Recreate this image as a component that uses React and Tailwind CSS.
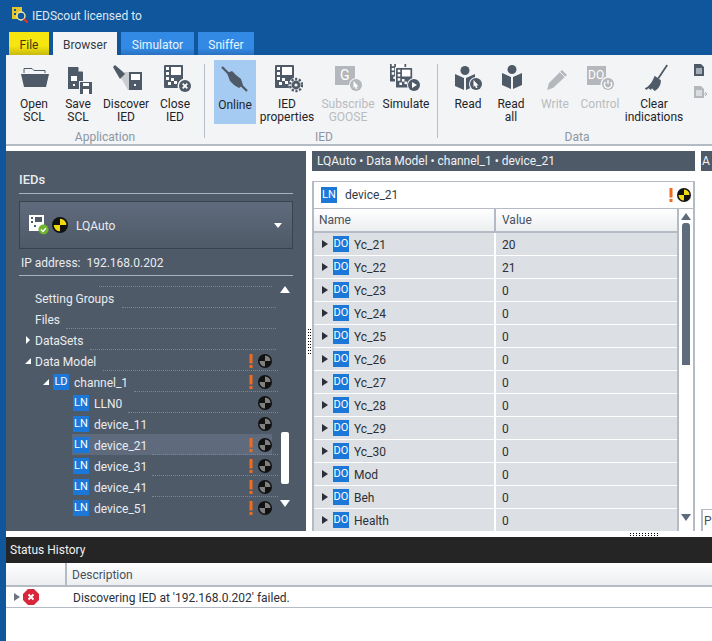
import React from "react";

const dark = "#4f5a68";
const grey = "#b4b8bd";

// the small device with screen and checker squares, used in several ribbon icons
const Device = ({ x = 3, y = 1, scale = 1, color = dark }) => (
  <g transform={`translate(${x} ${y}) scale(${scale})`}>
    <rect width="19" height="23" rx="1" fill={color} />
    <rect x="2" y="2" width="3" height="3" fill="#fff" />
    <rect x="2" y="7" width="3" height="3" fill="#fff" />
    <rect x="7" y="2" width="10" height="8" fill="#fff" />
    <rect x="2" y="12" width="3" height="3" fill="#fff" />
    <rect x="7" y="13" width="3" height="3" fill="#fff" />
    <rect x="10" y="16" width="3" height="3" fill="#fff" />
    <rect x="4" y="17" width="3" height="3" fill="#fff" />
  </g>
);

const Gear = ({ cx, cy }) => (
  <g>
    <circle cx={cx} cy={cy} r="7.5" fill="#f3f4f6" />
    <circle cx={cx} cy={cy} r="6" fill="none" stroke={dark} strokeWidth="2.4" strokeDasharray="2.2 1.6" />
    <circle cx={cx} cy={cy} r="4.4" fill={dark} />
    <circle cx={cx} cy={cy} r="1.6" fill="#f3f4f6" />
  </g>
);

const Cursor = ({ cx, cy, color = dark }) => (
  <g>
    <circle cx={cx} cy={cy} r="7" fill="#f3f4f6" />
    <circle cx={cx} cy={cy} r="6" fill={color} />
    <path d={`M${cx - 2.5} ${cy - 4} l5 5.5 h-2 l1 2.5 h-1.6 l-1 -2.5 l-1.4 1.4 z`} fill="#fff" />
  </g>
);

const Book = ({ x, y }) => (
  <g transform={`translate(${x} ${y})`} fill={dark}>
    <circle cx="10" cy="4.5" r="4.5" />
    <path d="M0 8 L9 12 V24 L0 20 Z" />
    <path d="M20 8 L11 12 V24 L20 20 Z" />
  </g>
);

const Icon = ({ children }) => (
  <svg viewBox="0 0 32 32" className="w-8 h-8">
    {children}
  </svg>
);

const icons = {
  open: (
    <Icon>
      <path d="M6 9 V4.5 h8 l2 2 h11 V9" fill="none" stroke={dark} strokeWidth="1" />
      <path d="M3 10 H31 L28 23 H6 Z" fill={dark} />
    </Icon>
  ),
  save: (
    <Icon>
      <path d="M6 3 H16 L21 8 V25 H6 Z" fill={dark} />
      <path d="M16.5 3 L21 7.5 H16.5 Z" fill="#f3f4f6" />
      <rect x="9" y="12" width="6" height="5" fill="#fff" />
      <rect x="11" y="20" width="2" height="2" fill="#fff" />
      <rect x="17" y="17" width="14" height="14" fill="#f3f4f6" />
      <path d="M18 18 H30 V30 H18 Z" fill={dark} />
      <rect x="21" y="19" width="6" height="3" fill="#fff" />
      <rect x="21" y="25" width="6" height="5" fill="#fff" />
    </Icon>
  ),
  discover: (
    <Icon>
      <path d="M14 8 L20 8 V26 H18 L11 14 Z" fill="#c9cdd2" />
      <rect x="19" y="8" width="13" height="18" fill={dark} />
      <rect x="21" y="10" width="9" height="6" fill="#fff" />
      <rect x="24" y="20" width="2" height="2" fill="#fff" />
      <path d="M3 3 L5 1 L12 7 L15 10 L10 15 L7 10 Z" fill={dark} />
    </Icon>
  ),
  close: (
    <Icon>
      <Device x={5} y={1} />
      <circle cx="26" cy="22" r="7.5" fill="#f3f4f6" />
      <circle cx="26" cy="22" r="6" fill={dark} />
      <path d="M23.7 19.7 L28.3 24.3 M28.3 19.7 L23.7 24.3" stroke="#fff" strokeWidth="1.8" />
    </Icon>
  ),
  online: (
    <Icon>
      <path d="M3 3 L10 10 M21 20 L28 27" stroke={dark} strokeWidth="2.4" />
      <path d="M8 9 L13 7 L17 11 L22 15 L24 21 L20 24 L15 21 L11 17 Z" fill={dark} />
    </Icon>
  ),
  props: (
    <Icon>
      <Device x={4} y={1} />
      <Gear cx={25} cy={21} />
    </Icon>
  ),
  subscribe: (
    <Icon>
      <rect x="3" y="2" width="20" height="19" fill={grey} />
      <text x="8" y="16" fontSize="14" fontFamily="Roboto" fill="#fff">G</text>
      <Cursor cx={24} cy={21} color={grey} />
    </Icon>
  ),
  simulate: (
    <Icon>
      <Device x={0} y={-2} scale={0.85} />
      <rect x="5" y="3" width="19" height="22" fill="#f3f4f6" />
      <Device x={6} y={4} scale={0.85} />
      <circle cx="24" cy="21" r="7" fill="#f3f4f6" />
      <circle cx="24" cy="21" r="6" fill={dark} />
      <path d="M22 18 L27 21 L22 24 Z" fill="#fff" />
    </Icon>
  ),
  read: (
    <Icon>
      <Book x={3} y={2} />
      <Cursor cx={24} cy={20} />
    </Icon>
  ),
  readAll: (
    <Icon>
      <Book x={7} y={1} />
    </Icon>
  ),
  write: (
    <Icon>
      <path d="M10 19 L23 6 L28 11 L14 24 L8 26 Z" fill={grey} />
      <path d="M21 8 L26 13" stroke="#f3f4f6" strokeWidth="1" />
    </Icon>
  ),
  control: (
    <Icon>
      <rect x="3" y="2" width="19" height="19" fill={grey} />
      <text x="4" y="15" fontSize="12" fontFamily="Roboto" fill="#fff">DO</text>
      <circle cx="24" cy="20" r="7.5" fill="#f3f4f6" />
      <circle cx="24" cy="20" r="6" fill={grey} />
      <path d="M21.5 18 a3.5 3.5 0 1 0 5 0 M24 16 v4" fill="none" stroke="#fff" strokeWidth="1.3" />
    </Icon>
  ),
  clear: (
    <Icon>
      <g transform="translate(4 0) scale(.9)">
        <path d="M28 1 L18 16" stroke={dark} strokeWidth="2" />
        <path d="M14 13 L21 18 C21 24 18 28 14 30 L11 27 L10 29 L7 27 L5 29 L3 27 C8 25 12 19 14 13 Z" fill={dark} />
      </g>
    </Icon>
  ),
};

const SmallDoc = ({ color, arrow }) => (
  <svg viewBox="0 0 14 14" className="w-[14px] h-[14px]">
    <path d="M1 1 H8 L11 4 V13 H1 Z" fill={color} />
    <path d="M3 6 H9 M3 8 H9 M3 10 H9" stroke="#fff" strokeWidth="1" />
    {arrow && <path d="M10 9 H14 M12 7 L14 9 L12 11" stroke={color} fill="none" />}
  </svg>
);

const Ball = ({ color = "#808080", size = 14 }) => (
  <svg viewBox="0 0 14 14" style={{ width: size, height: size }} className="shrink-0">
    <circle cx="7" cy="7" r="7" fill="#111" />
    <path d="M7 7 V1.5 A5.5 5.5 0 0 1 12.5 7 Z M7 7 V12.5 A5.5 5.5 0 0 1 1.5 7 Z" fill={color} />
  </svg>
);

const Bang = ({ hidden }) => (
  <svg viewBox="0 0 4 14" className={hidden ? "w-1 h-[14px] invisible" : "w-1 h-[14px]"}>
    <rect x="0.5" y="0" width="3" height="9.5" fill="#f26a1b" />
    <rect x="0.5" y="11" width="3" height="3" fill="#f26a1b" />
  </svg>
);

const Badge = ({ label }) => (
  <span className="w-4 h-4 bg-[#1b78d8] text-white text-[11px] leading-4 text-center shrink-0">
    {label}
  </span>
);

const Arrow = ({ open, color = "white" }) => (
  <svg viewBox="0 0 8 8" className="w-2 h-2">
    {open ? <path d="M7 1 V7 H1 Z" fill={color} /> : <path d="M2 0 L6 4 L2 8 Z" fill={color} />}
  </svg>
);

const Dots = ({ cols, rows = 3 }) => (
  <div className="flex flex-col gap-px">
    {Array.from({ length: rows }).map((_, r) => (
      <div key={r} className="flex gap-[2px]">
        {Array.from({ length: cols }).map((_, c) => (
          <span key={c} className="w-px h-px bg-black" />
        ))}
      </div>
    ))}
  </div>
);

const RibbonButton = ({ icon, lines, width, disabled, active }) => (
  <div
    className={`${width} h-16 pt-1 flex flex-col items-center shrink-0 ${active ? "bg-[#a6cbf3]" : ""} ${
      disabled ? "text-[#b9bcc0]" : "text-[#1f2429]"
    }`}
  >
    {icons[icon]}
    <div className={`${active ? "mt-[3px]" : "mt-[2px]"} text-[12px] leading-[13px] text-center whitespace-nowrap`}>
      {lines.map((l) => (
        <div key={l}>{l}</div>
      ))}
    </div>
  </div>
);

const Group = ({ label, width, children }) => (
  <div className={`${width} flex flex-col shrink-0`}>
    <div className="flex h-16">{children}</div>
    <div className="mt-[5px] h-4 text-[12px] leading-4 text-center text-[#8c96a3]">{label}</div>
  </div>
);

const Sep = () => <div className="w-px h-[74px] mt-1 bg-[#b9bfc7] shrink-0" />;

const Tab = ({ label, width, tone }) => (
  <div className={`${width} h-[23px] text-[12px] leading-[27px] text-center ${tone}`}>{label}</div>
);

const treeRows = [
  { label: "Setting Groups", left: "pl-[29px]", dots: "ml-[110px] w-[154px]" },
  { label: "Files", left: "pl-[29px]", dots: "ml-[54px] w-[210px]" },
  { label: "DataSets", left: "pl-[18px]", arrow: "closed", dots: "ml-[78px] w-[186px]" },
  { label: "Data Model", left: "pl-[18px]", arrow: "open", bang: true, ball: true, dots: "ml-[91px] w-[175px]" },
  { label: "channel_1", left: "pl-[36px]", arrow: "open", badge: "LD", bang: true, ball: true, dots: "ml-[122px] w-[144px]" },
  { label: "LLN0", left: "pl-[66px]", badge: "LN", ball: true, dots: "ml-[116px] w-[150px]" },
  { label: "device_11", left: "pl-[66px]", badge: "LN", ball: true },
  { label: "device_21", left: "pl-[66px]", badge: "LN", bang: true, ball: true, selected: true, dots: "ml-[140px] w-[126px]" },
  { label: "device_31", left: "pl-[66px]", badge: "LN", bang: true, ball: true, dots: "ml-[140px] w-[126px]" },
  { label: "device_41", left: "pl-[66px]", badge: "LN", bang: true, ball: true, dots: "ml-[140px] w-[126px]" },
  { label: "device_51", left: "pl-[66px]", badge: "LN", bang: true, ball: true },
];

const TreeRow = ({ row }) => (
  <div className="h-[21px] relative">
    <div className={`h-[21px] flex items-center ${row.left}`}>
      <div className={`flex items-center h-[21px] flex-1 ${row.selected ? "bg-[#5f6b7c]" : ""}`}>
        {row.arrow && (
          <span className="w-2 mr-[3px]">
            <Arrow open={row.arrow === "open"} />
          </span>
        )}
        {row.badge && (
          <span className={row.badge === "LD" ? "mr-[5px] flex" : "ml-px mr-[5px] flex"}>
            <Badge label={row.badge} />
          </span>
        )}
        <span className="text-[12px] text-[#e9ecef] flex-1 pt-[2px]">{row.label}</span>
        <span className="mr-[5px] flex">
          <Bang hidden={!row.bang} />
        </span>
        {row.ball ? <Ball /> : <span className="w-[14px]" />}
      </div>
    </div>
    {row.dots && <div className={`absolute bottom-0 left-[6px] border-b border-dotted border-[#7c8695] ${row.dots}`} />}
  </div>
);

const tableRows = [
  ["Yc_21", "20"],
  ["Yc_22", "21"],
  ["Yc_23", "0"],
  ["Yc_24", "0"],
  ["Yc_25", "0"],
  ["Yc_26", "0"],
  ["Yc_27", "0"],
  ["Yc_28", "0"],
  ["Yc_29", "0"],
  ["Yc_30", "0"],
  ["Mod", "0"],
  ["Beh", "0"],
  ["Health", "0"],
];

const App = () => {
  return (
    <div className="w-[712px] h-[641px] overflow-hidden bg-white flex flex-col font-['Roboto',sans-serif]">
      {/* title bar with tabs */}
      <div className="h-[55px] bg-[#10569c] shrink-0">
        <div className="h-8 flex items-center pl-3">
          <svg viewBox="0 0 16 16" className="w-4 h-4 -mt-[2px]">
            <rect x="0" y="0" width="10" height="12" fill="#e6c52a" />
            <rect x="2" y="2" width="2" height="2" fill="#10569c" />
            <rect x="2" y="6" width="2" height="2" fill="#10569c" />
            <circle cx="9" cy="9" r="4" fill="#10569c" stroke="#f3e9a8" strokeWidth="1.4" />
            <path d="M12 12 L16 16" stroke="#d8342a" strokeWidth="2.4" />
          </svg>
          <span className="ml-[4px] text-[12px] text-[#dfe8f2]">IEDScout licensed to</span>
        </div>
        <div className="flex gap-1 pl-[9px]">
          <Tab label="File" width="w-10" tone="bg-gradient-to-b from-[#f6e60f] from-60% to-[#c9b90e] text-[#3d3a10]" />
          <Tab label="Browser" width="w-16" tone="bg-[#f3f4f6] text-[#333b45]" />
          <Tab label="Simulator" width="w-[73px]" tone="bg-gradient-to-b from-[#338ae5] from-70% to-[#2a70c0] text-[#eaf3fd]" />
          <Tab label="Sniffer" width="w-14" tone="bg-gradient-to-b from-[#338ae5] from-70% to-[#2a70c0] text-[#eaf3fd]" />
        </div>
      </div>

      <div className="flex-1 flex min-h-0">
        <div className="w-[6px] bg-[#10569c] shrink-0" />
        <div className="flex-1 flex flex-col min-w-0">
          {/* ribbon */}
          <div className="h-[91px] bg-[#f3f4f6] border-b-2 border-[#b5bbc4] pt-[5px] flex shrink-0 overflow-hidden">
            <div className="ml-[6px]">
              <Group label="Application" width="w-[186px]">
                <RibbonButton icon="open" lines={["Open", "SCL"]} width="w-11" />
                <RibbonButton icon="save" lines={["Save", "SCL"]} width="w-11" />
                <RibbonButton icon="discover" lines={["Discover", "IED"]} width="w-[52px]" />
                <RibbonButton icon="close" lines={["Close", "IED"]} width="w-[46px]" />
              </Group>
            </div>
            <div className="ml-[6px]">
              <Sep />
            </div>
            <div className="ml-[9px]">
              <Group label="IED" width="w-[220px]">
                <RibbonButton icon="online" lines={["Online"]} width="w-[42px]" active />
                <RibbonButton icon="props" lines={["IED", "properties"]} width="w-[62px]" />
                <RibbonButton icon="subscribe" lines={["Subscribe", "GOOSE"]} width="w-[60px]" disabled />
                <RibbonButton icon="simulate" lines={["Simulate"]} width="w-14" />
              </Group>
            </div>
            <div className="ml-[3px]">
              <Sep />
            </div>
            <div className="ml-[10px]">
              <Group label="Data" width="w-[258px]">
                <RibbonButton icon="read" lines={["Read"]} width="w-10" />
                <RibbonButton icon="readAll" lines={["Read", "all"]} width="w-[46px]" />
                <RibbonButton icon="write" lines={["Write"]} width="w-[42px]" disabled />
                <RibbonButton icon="control" lines={["Control"]} width="w-12" disabled />
                <RibbonButton icon="clear" lines={["Clear", "indications"]} width="w-[60px]" />
                <div className="flex flex-col gap-2 pt-[3px] pl-[9px] shrink-0">
                  <SmallDoc color={dark} />
                  <SmallDoc color={grey} arrow />
                </div>
              </Group>
            </div>
          </div>

          {/* main panels */}
          <div className="mt-[5px] h-[380px] flex shrink-0">
            {/* IEDs panel */}
            <div className="w-[300px] h-full bg-[#4f5a68] shrink-0 flex flex-col pt-[19px] text-[#e9ecef]">
              <div className="mx-[13px] h-[24px] border-b border-[#aab2bf] text-[13px] font-medium leading-[20px]">IEDs</div>
              <div className="mx-[13px] mt-[7px] h-12 border border-[#39424e] bg-gradient-to-b from-[#5f6b7c] to-[#4f5a68] flex items-center pl-[9px] pr-[10px]">
                <svg viewBox="0 0 20 20" className="w-5 h-5">
                  <rect x="0" y="0" width="15" height="16" fill="#fff" />
                  <rect x="6" y="2" width="7" height="5" fill="#4f5a68" />
                  <rect x="2" y="2" width="2" height="2" fill="#4f5a68" />
                  <rect x="2" y="6" width="2" height="2" fill="#4f5a68" />
                  <rect x="5" y="10" width="2" height="2" fill="#4f5a68" />
                  <circle cx="14.5" cy="14.5" r="5" fill="#6eb52c" />
                  <path d="M12 14.5 L14 16.5 L17 13" stroke="#fff" strokeWidth="1.4" fill="none" />
                </svg>
                <span className="ml-[3px] flex">
                  <Ball color="#f0d90e" size={16} />
                </span>
                <span className="ml-2 text-[12px] flex-1 pt-[2px]">LQAuto</span>
                <svg viewBox="0 0 8 5" className="w-2 h-[5px]">
                  <path d="M0 0 H8 L4 5 Z" fill="#fff" />
                </svg>
              </div>
              <div className="mx-[13px] h-[27px] border-b border-[#aab2bf] text-[12px] leading-[28px] pl-[2px] whitespace-pre">IP address:  192.168.0.202</div>
              <div className="flex flex-1 min-h-0">
                <div className="w-[266px] shrink-0">
                  <div className="h-[11px] relative">
                    <div className="absolute bottom-0 left-[93px] w-[173px] border-b border-dotted border-[#7c8695]" />
                  </div>
                  {treeRows.map((row) => (
                    <TreeRow key={row.label} row={row} />
                  ))}
                </div>
                <div className="ml-[9px] w-2 flex flex-col items-center pt-[10px]">
                  <svg viewBox="0 0 10 7" className="w-[10px] h-[7px] shrink-0">
                    <path d="M0 7 H10 L5 0 Z" fill="#fff" />
                  </svg>
                  <div className="mt-[139px] w-2 h-[52px] bg-white rounded-[2px] shrink-0" />
                  <svg viewBox="0 0 10 7" className="mt-[16px] w-[10px] h-[7px] shrink-0">
                    <path d="M0 0 H10 L5 7 Z" fill="#fff" />
                  </svg>
                </div>
              </div>
            </div>

            {/* vertical splitter */}
            <div className="w-[6px] shrink-0 flex items-center justify-center">
              <div className="flex gap-[1px]">
                <div className="flex flex-col gap-[2px]">
                  {Array.from({ length: 9 }).map((_, i) => (
                    <span key={i} className="w-px h-px bg-black" />
                  ))}
                </div>
                <div className="flex flex-col gap-[2px]">
                  {Array.from({ length: 9 }).map((_, i) => (
                    <span key={i} className="w-px h-px bg-black" />
                  ))}
                </div>
              </div>
            </div>

            {/* data model panel */}
            <div className="w-[383px] shrink-0 flex flex-col">
              <div className="h-5 bg-[#4f5a68] text-[#f0f2f4] text-[12px] leading-5 pl-[5px] shrink-0">
                LQAuto • Data Model • channel_1 • device_21
              </div>
              <div className="mt-[10px] flex-1 min-h-0 border-x-2 border-t border-[#b5bbc4] flex flex-col">
                <div className="h-[26px] flex items-center pl-[7px] pr-[2px] shrink-0">
                  <Badge label="LN" />
                  <span className="ml-2 text-[12px] text-[#333b45] flex-1">device_21</span>
                  <span className="mr-[4px] flex">
                    <Bang />
                  </span>
                  <Ball color="#f0d90e" />
                </div>
                <div className="flex flex-1 min-h-0 border-t border-[#b5bbc4]">
                  <div className="flex-1 min-w-0 flex flex-col">
                    <div className="h-6 flex shrink-0 border-b-2 border-[#b5bbc4] bg-gradient-to-b from-white to-[#eceef0] text-[12px] text-[#46505c] leading-[22px]">
                      <div className="w-[182px] pl-[5px] border-r-2 border-[#b5bbc4]">Name</div>
                      <div className="pl-[6px]">Value</div>
                    </div>
                    <div className="flex-1 overflow-hidden">
                      {tableRows.map(([name, value]) => (
                        <div key={name} className="h-[23px] flex bg-[#dcdfe3] border-b border-white text-[12px] text-[#2a3038]">
                          <div className="w-[182px] flex items-center pl-2 border-r-2 border-white">
                            <svg viewBox="0 0 6 8" className="w-[6px] h-2 mr-[5px]">
                              <path d="M0 0 L6 4 L0 8 Z" fill="#2a3038" />
                            </svg>
                            <Badge label="DO" />
                            <span className="ml-[5px] pt-[2px]">{name}</span>
                          </div>
                          <div className="pl-[6px] leading-[24px]">{value}</div>
                        </div>
                      ))}
                    </div>
                  </div>
                  <div className="w-4 shrink-0 border-l-2 border-[#b5bbc4] flex flex-col items-center pt-[4px]">
                    <svg viewBox="0 0 10 7" className="w-[10px] h-[7px] shrink-0">
                      <path d="M0 7 H10 L5 0 Z" fill="#5e6b7c" />
                    </svg>
                    <div className="mt-[3px] w-2 h-[142px] bg-[#5e6b7c] rounded-t-[3px] shrink-0" />
                    <svg viewBox="0 0 10 7" className="mt-[149px] w-[10px] h-[7px] shrink-0">
                      <path d="M0 0 H10 L5 7 Z" fill="#5e6b7c" />
                    </svg>
                  </div>
                </div>
              </div>
            </div>

            {/* cut off panel on the right */}
            <div className="ml-[6px] flex-1 min-w-0 flex flex-col">
              <div className="h-5 bg-[#4f5a68] text-[#f0f2f4] text-[12px] leading-5 pl-[1px] shrink-0">A</div>
              <div className="flex-1" />
              <div className="h-[22px] border-l-2 border-t border-[#b5bbc4] text-[12px] text-[#46505c] pl-[1px] leading-[22px]">P</div>
            </div>
          </div>

          {/* horizontal splitter */}
          <div className="h-[6px] shrink-0 flex justify-end items-center pr-[54px]">
            <Dots cols={10} rows={2} />
          </div>

          {/* status history */}
          <div className="h-[26px] bg-[#252525] text-[#f0f0f0] text-[12px] leading-[27px] pl-1 shrink-0">Status History</div>
          <div className="h-6 flex border-b-2 border-[#b5bbc4] bg-gradient-to-b from-white to-[#eceef0] text-[12px] text-[#46505c] shrink-0">
            <div className="w-[61px] border-r-2 border-[#b5bbc4]" />
            <div className="pl-[5px] leading-[25px]">Description</div>
          </div>
          <div className="h-[21px] flex items-center border-b border-[#b5bbc4] text-[12px] text-[#2a3038] shrink-0">
            <div className="w-[61px] flex items-center pl-2">
              <svg viewBox="0 0 6 8" className="w-[6px] h-2">
                <path d="M0 0 L6 4 L0 8 Z" fill="#6b7480" />
              </svg>
              <svg viewBox="0 0 16 16" className="w-4 h-4 ml-[3px]">
                <path d="M5 0 H11 L16 5 V11 L11 16 H5 L0 11 V5 Z" fill="#d8263a" />
                <path d="M5.5 5.5 L10.5 10.5 M10.5 5.5 L5.5 10.5" stroke="#fff" strokeWidth="2" />
              </svg>
            </div>
            <div className="pl-[6px] pt-[2px]">Discovering IED at '192.168.0.202' failed.</div>
          </div>
        </div>
      </div>
    </div>
  );
};

export default App;
